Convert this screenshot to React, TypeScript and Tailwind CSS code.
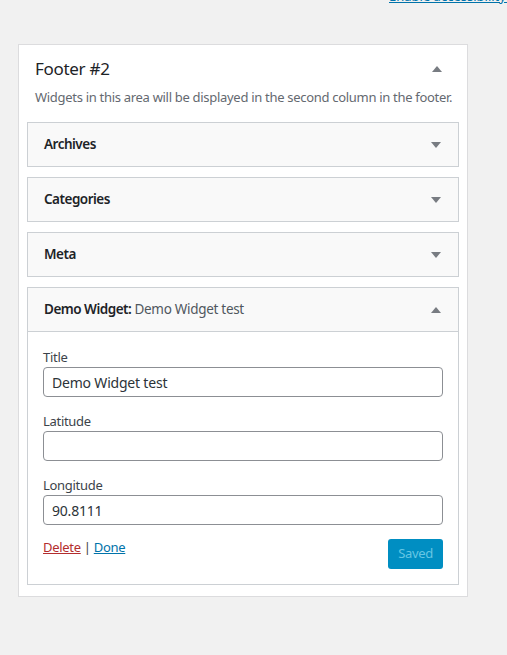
import React from "react";

const font = { fontFamily: '"Noto Sans", "Open Sans", sans-serif' };

function Arrow({ up }: { up?: boolean }) {
  return (
    <svg width="10" height="6" viewBox="0 0 10 6" className="shrink-0">
      {up ? <path d="M5 0 L10 6 L0 6 Z" fill="#787c82" /> : <path d="M0 0 L10 0 L5 6 Z" fill="#787c82" />}
    </svg>
  );
}

function CollapsedWidget({ title }: { title: string }) {
  return (
    <div className="flex h-[45px] items-center justify-between border border-[#ccd0d4] bg-[#f9f9f9] pl-4 pr-[17px]">
      <span className="text-[13.5px] font-semibold tracking-[-0.5px] text-[#1d2327]">{title}</span>
      <Arrow />
    </div>
  );
}

function Field({ label, value }: { label: string; value: string }) {
  return (
    <div className="flex flex-col">
      <label className="text-[13px] leading-[19px] tracking-[-0.3px] text-[#3c434a]">{label}</label>
      <input
        readOnly
        value={value}
        className="h-[30px] w-full rounded-[4px] border border-[#8c8f94] px-2 text-[14px] tracking-[-0.2px] text-[#2c3338] outline-none"
        style={font}
      />
    </div>
  );
}

export default function App() {
  return (
    <div className="min-h-screen bg-[#f1f1f1]" style={font}>
      <div className="flex h-[5px] items-end overflow-hidden pl-[389px]">
        <a className="whitespace-nowrap text-[13px] leading-[18px] text-[#0073aa] underline">Enable accessibility mode</a>
      </div>

      <section className="ml-[18px] mt-[39px] w-[450px] border border-[#dcdcde] bg-white pb-[11px]">
        <div className="flex items-center justify-between pl-4 pr-[25px] pt-[12px]">
          <h2 className="text-[17px] font-normal leading-[24px] tracking-[-0.3px] text-[#1d2327]">Footer #2</h2>
          <Arrow up />
        </div>
        <p className="whitespace-nowrap px-4 pt-[6px] text-[13px] leading-[20px] tracking-[-0.3px] text-[#646970]">
          Widgets in this area will be displayed in the second column in the footer.
        </p>

        <div className="mt-[15px] flex flex-col gap-[10px] px-2">
          <CollapsedWidget title="Archives" />
          <CollapsedWidget title="Categories" />
          <CollapsedWidget title="Meta" />

          <div className="border border-[#ccd0d4] bg-white">
            <div className="flex h-[44px] items-center justify-between border-b border-[#ccd0d4] bg-[#f9f9f9] pl-4 pr-[17px]">
              <span className="text-[13.5px] tracking-[-0.3px] text-[#1d2327]">
                <span className="font-semibold tracking-[-0.5px]">Demo Widget:</span>{" "}
                <span className="text-[#50575e]">Demo Widget test</span>
              </span>
              <Arrow up />
            </div>
            <div className="flex flex-col gap-[15px] px-[15px] pt-[16px]">
              <Field label="Title" value="Demo Widget test" />
              <Field label="Latitude" value="" />
              <Field label="Longitude" value="90.8111" />
            </div>
            <div className="flex items-start justify-between px-[15px] pb-[15px] pt-[14px]">
              <div className="-mt-[1px] text-[13px] tracking-[-0.3px] text-[#3c434a]">
                <a className="text-[#b32d2e] underline">Delete</a> | <a className="text-[#0073aa] underline">Done</a>
              </div>
              <button
                className="h-[30px] rounded-[3px] bg-[#008ec2] px-[10px] text-[13px] tracking-[-0.3px] text-[#66c6e4]"
                style={font}
              >
                Saved
              </button>
            </div>
          </div>
        </div>
      </section>
    </div>
  );
}
